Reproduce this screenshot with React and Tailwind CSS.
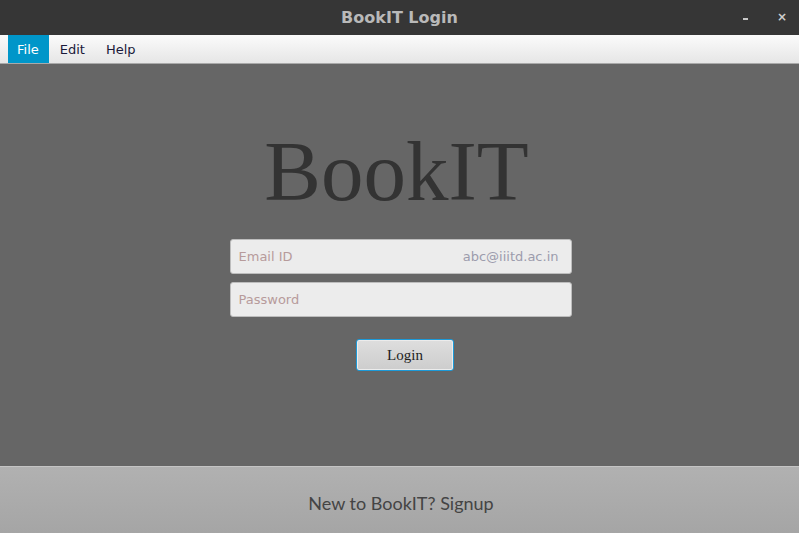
export default function App() {
  return (
    <div className="flex h-[533px] w-[799px] flex-col overflow-hidden bg-[#666666] font-['DejaVu_Sans',sans-serif]">
      {/* title bar */}
      <div className="relative flex h-[35px] shrink-0 items-center justify-center bg-[#363636]">
        <span className="text-[16px] font-bold text-[#b9b9b9]">BookIT Login</span>
        <span className="absolute left-[743px] top-[18px] h-[2px] w-[5px] bg-[#c8c8c8]" />
        <span className="absolute left-[777px] top-[11px] text-[12px] font-bold leading-none text-[#cfcfcf]">×</span>
      </div>

      {/* menu bar */}
      <div className="flex h-[29px] shrink-0 items-stretch border-b border-[#a9a9a9] bg-gradient-to-b from-[#fbfbfb] to-[#e6e6e6] pl-[8px] text-[13px]">
        <div className="flex items-center bg-[#0096c9] pl-[9px] pr-[10px] pt-[2px] text-white">File</div>
        <div className="flex items-center pl-[11px] pr-[21px] pt-[2px] text-[#1a1a3a]">Edit</div>
        <div className="flex items-center pt-[2px] text-[#1a1a3a]">Help</div>
      </div>

      {/* body */}
      <div className="flex flex-1 flex-col items-center">
        <h1 className="mr-[6px] mt-[57px] font-['Liberation_Serif',serif] text-[85px] leading-[100px] text-[#333333]">BookIT</h1>
        <div className="ml-[2px] mt-[18px] flex h-[35px] w-[342px] items-center justify-between rounded-[3px] border border-[#bdbdbd] bg-[#ececec] px-[8px] text-[13px]">
          <span className="text-[#b79b9b]">Email ID</span>
          <span className="pr-[4px] text-[#9c9cac]">abc@iiitd.ac.in</span>
        </div>
        <div className="ml-[2px] mt-[8px] flex h-[35px] w-[342px] items-center rounded-[3px] border border-[#bdbdbd] bg-[#ececec] px-[8px] text-[13px]">
          <span className="text-[#b79b9b]">Password</span>
        </div>
        <button className="ml-[11px] mt-[22px] flex h-[32px] w-[98px] items-center justify-center rounded-[3px] border-[1.5px] border-[#1d9ad8] bg-gradient-to-b from-[#dedede] to-[#cdcdcd] pt-[1px] font-['Liberation_Serif',serif] text-[15px] text-[#222222] shadow-[inset_0_0_0_1px_#ececec]">
          Login
        </button>
      </div>

      {/* footer */}
      <div className="flex h-[67px] shrink-0 items-center justify-center border-t border-[#c4c4c4] bg-gradient-to-b from-[#b1b1b1] to-[#a5a5a5] pt-[6px] font-['Lato',sans-serif] text-[18px] text-[#444444]">
        <span className="ml-[3px]">New to BookIT? Signup</span>
      </div>
    </div>
  );
}
